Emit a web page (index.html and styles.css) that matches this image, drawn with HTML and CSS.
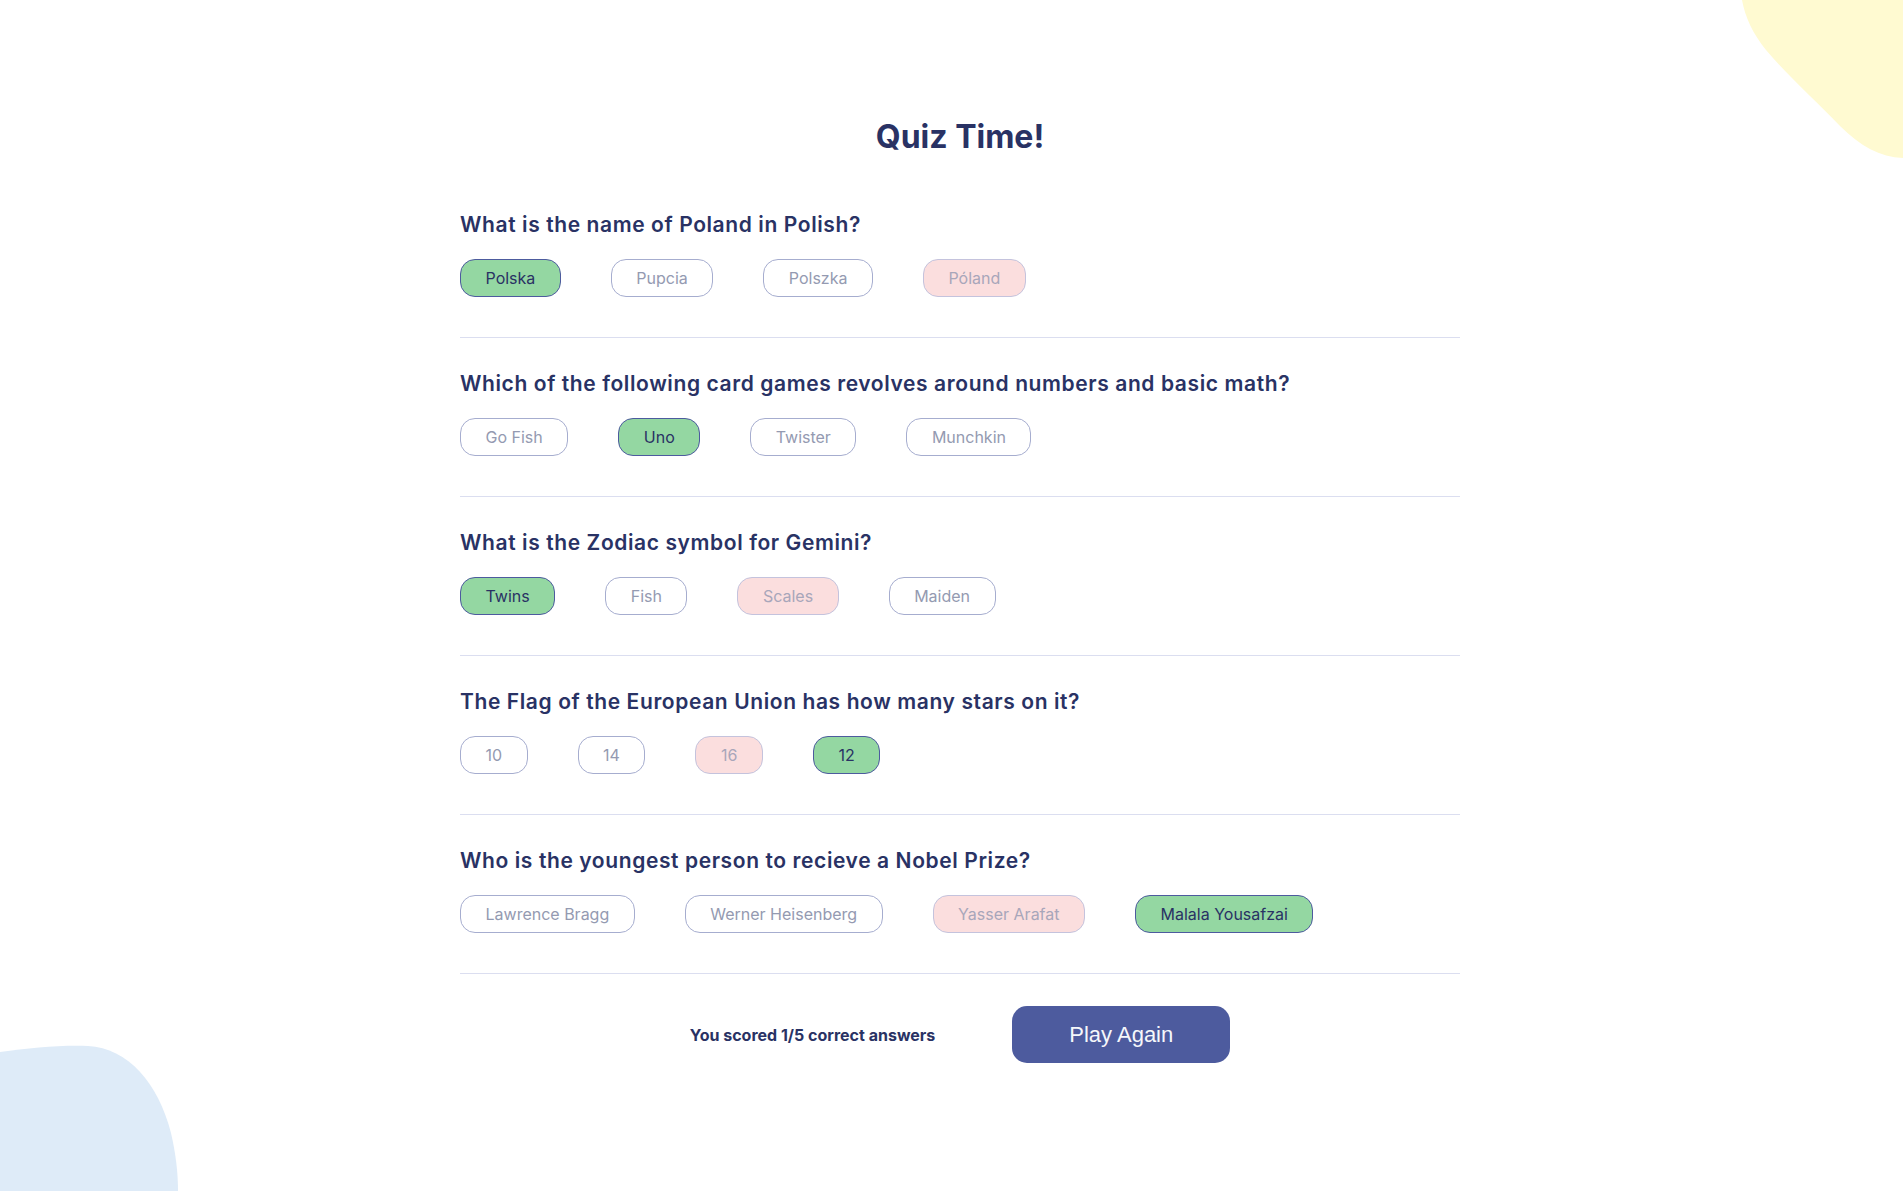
FILE: index.html
```html
<!DOCTYPE html>
<html lang="en">
<head>
<meta charset="utf-8">
<title>Quizzical</title>
<link rel="stylesheet" href="styles.css">
</head>
<body>
<svg class="blob blob-yellow" width="161" height="160" viewBox="0 0 161 160" aria-hidden="true">
  <path d="M0,0 L161,0 L161,158 C138,157 118,146 98,126 C72,99 44,74 24,50 C11,34 3,17 0,0 Z" fill="#FFFAD1"/>
</svg>
<svg class="blob blob-blue" width="180" height="146" viewBox="0 0 180 146" aria-hidden="true">
  <path d="M0,7 C30,3 60,0 88,1 C128,3 158,38 171,88 C176,110 178,128 178,146 L0,146 Z" fill="#DEEBF8"/>
</svg>
<div class="page">
  <main class="quiz">
    <h1 class="title">Quiz Time!</h1>

    <section class="question">
      <h2 class="question-text">What is the name of Poland in Polish?</h2>
      <div class="answers">
        <span class="answer correct">Polska</span>
        <span class="answer">Pupcia</span>
        <span class="answer">Polszka</span>
        <span class="answer wrong">Póland</span>
      </div>
    </section>

    <section class="question">
      <h2 class="question-text">Which of the following card games revolves around numbers and basic math?</h2>
      <div class="answers">
        <span class="answer">Go Fish</span>
        <span class="answer correct">Uno</span>
        <span class="answer">Twister</span>
        <span class="answer">Munchkin</span>
      </div>
    </section>

    <section class="question">
      <h2 class="question-text">What is the Zodiac symbol for Gemini?</h2>
      <div class="answers">
        <span class="answer correct">Twins</span>
        <span class="answer">Fish</span>
        <span class="answer wrong">Scales</span>
        <span class="answer">Maiden</span>
      </div>
    </section>

    <section class="question">
      <h2 class="question-text">The Flag of the European Union has how many stars on it?</h2>
      <div class="answers">
        <span class="answer">10</span>
        <span class="answer">14</span>
        <span class="answer wrong">16</span>
        <span class="answer correct">12</span>
      </div>
    </section>

    <section class="question">
      <h2 class="question-text">Who is the youngest person to recieve a Nobel Prize?</h2>
      <div class="answers">
        <span class="answer">Lawrence Bragg</span>
        <span class="answer">Werner Heisenberg</span>
        <span class="answer wrong">Yasser Arafat</span>
        <span class="answer correct">Malala Yousafzai</span>
      </div>
    </section>

    <div class="result">
      <p class="score">You scored 1/5 correct answers</p>
      <button class="play-again" type="button">Play Again</button>
    </div>
  </main>
</div>
</body>
</html>
```

FILE: styles.css
```css
* { box-sizing: border-box; }

html, body {
  margin: 0;
  padding: 0;
  background: #ffffff;
}

body {
  font-family: Inter, "Liberation Sans", sans-serif;
  color: #293264;
  min-height: 1191px;
  overflow: hidden;
}

.blob {
  position: absolute;
  display: block;
}
.blob-yellow { top: 0; right: 0; }
.blob-blue { left: 0; bottom: 0; }

.page {
  padding-left: 17px;
  position: relative;
}

.quiz {
  width: 1000px;
  margin: 0 auto;
}

.title {
  margin: 117px 0 22px;
  text-align: center;
  font-size: 32px;
  line-height: 40px;
  font-weight: 700;
  color: #293264;
}

.question {
  padding: 34px 0 40px;
  border-bottom: 1px solid #DBDEF0;
}

.question-text {
  margin: 0 0 22px;
  font-size: 21px;
  line-height: 24px;
  font-weight: 600;
  letter-spacing: 0.6px;
  color: #293264;
}

.answers {
  display: flex;
  gap: 50px;
}

.answer {
  display: inline-block;
  padding: 8px 24.5px;
  font-size: 16px;
  line-height: 20px;
  border: 1px solid #A6ADCF;
  border-radius: 15px;
  color: #949AB1;
  background: #ffffff;
}

.answer.correct {
  background: #94D7A2;
  border-color: #4D5B9E;
  color: #293264;
}

.answer.wrong {
  background: #FBDEDE;
  border-color: #C4C3DD;
  color: #A8A6BA;
}

.result {
  display: flex;
  justify-content: center;
  align-items: center;
  gap: 77px;
  padding-top: 32px;
}

.score {
  margin: 0;
  font-size: 16px;
  font-weight: 700;
  color: #293264;
}

.play-again {
  width: 218px;
  height: 57px;
  border: none;
  border-radius: 15px;
  background: #4D5B9E;
  color: #F5F7FB;
  font-family: "Liberation Sans", Arial, sans-serif;
  font-size: 22px;
  cursor: pointer;
}
```
